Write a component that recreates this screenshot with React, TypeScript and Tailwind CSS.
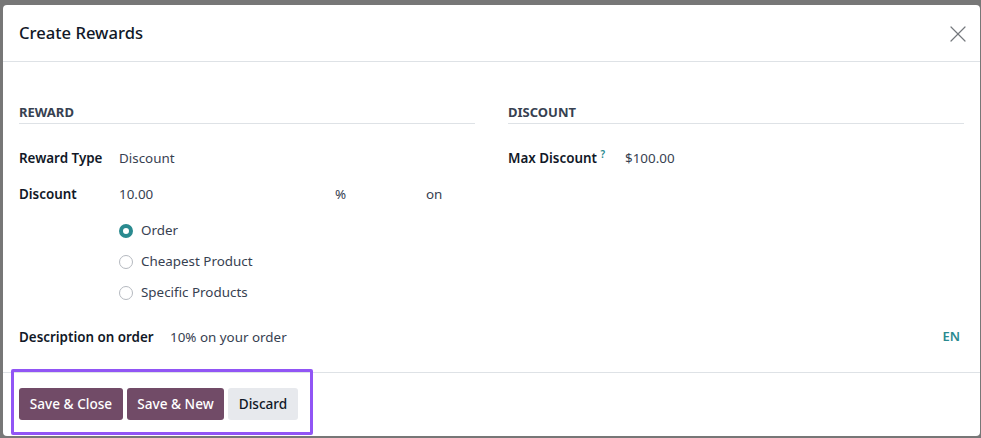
import { X } from "lucide-react";

function Radio({ label, checked }: { label: string; checked?: boolean }) {
  return (
    <div className="flex items-center gap-[8px] h-[31px]">
      {checked ? (
        <span className="w-[14px] h-[14px] rounded-full border-[4px] border-[#2a8a8f] bg-white" />
      ) : (
        <span className="w-[14px] h-[14px] rounded-full border border-[#b5b9bf] bg-white" />
      )}
      <span>{label}</span>
    </div>
  );
}

export default function App() {
  return (
    <div
      className="h-[438px] w-[981px] bg-[#777777] pt-[5px] pl-[3px] pr-[1px] pb-[2px] text-[13.4px] text-[#374151]"
      style={{ fontFamily: '"Noto Sans", "Open Sans", sans-serif' }}
    >
      <div className="relative h-full bg-white rounded-[4px] flex flex-col">
        {/* header */}
        <div className="h-[57px] flex items-center justify-between pl-[16px] pr-[8px] border-b border-[#dee2e6] shrink-0">
          <h1 className="text-[16.6px] font-medium text-[#111827] mt-[1px]">Create Rewards</h1>
          <X className="w-[28px] h-[28px] text-[#74787d] mt-[1px]" strokeWidth={1.05} />
        </div>

        {/* body */}
        <div className="flex-1 px-[16px] pt-[41px]">
          <div className="grid grid-cols-2 gap-x-[33px]">
            <div>
              <div className="text-[13px] font-bold text-[#374151] border-b border-[#dee2e6] pb-[2px] leading-[18px]">REWARD</div>
              <div className="mt-[24px] flex items-center h-[20px]">
                <span className="w-[100px] font-semibold text-[#111827]">Reward Type</span>
                <span>Discount</span>
              </div>
              <div className="mt-[16px] flex items-center h-[20px]">
                <span className="w-[100px] font-semibold text-[#111827]">Discount</span>
                <span className="w-[216px]">10.00</span>
                <span className="w-[91px]">%</span>
                <span>on</span>
              </div>
              <div className="mt-[11px] pl-[100px]">
                <Radio label="Order" checked />
                <Radio label="Cheapest Product" />
                <Radio label="Specific Products" />
              </div>
            </div>
            <div>
              <div className="text-[13px] font-bold text-[#374151] border-b border-[#dee2e6] pb-[2px] leading-[18px]">DISCOUNT</div>
              <div className="mt-[24px] flex items-center h-[20px]">
                <span className="w-[117px] font-semibold text-[#111827]">
                  Max Discount <sup className="text-[#2a8a8f] text-[10px] font-semibold">?</sup>
                </span>
                <span>$100.00</span>
              </div>
            </div>
          </div>
          <div className="mt-[19px] flex items-center h-[20px]">
            <span className="w-[151px] font-semibold text-[#111827]">Description on order</span>
            <span className="flex-1">10% on your order</span>
            <span className="text-[#2a8a8f] font-semibold text-[13px] pr-[4px]">EN</span>
          </div>
        </div>

        {/* footer */}
        <div className="h-[64px] border-t border-[#dee2e6] shrink-0 pl-[16px] pt-[15px] flex gap-[4px] items-start">
          <button className="h-[32px] rounded-[3px] bg-[#714b67] text-white font-medium w-[104px] whitespace-nowrap text-[13.6px]">Save &amp; Close</button>
          <button className="h-[32px] rounded-[3px] bg-[#714b67] text-white font-medium w-[97px] whitespace-nowrap text-[13.6px]">Save &amp; New</button>
          <button className="h-[32px] rounded-[3px] bg-[#e7e9ed] text-[#111827] font-medium w-[70px] whitespace-nowrap text-[13.6px]">Discard</button>
        </div>

        {/* highlight annotation */}
        <div className="absolute left-[8px] top-[364px] w-[302px] h-[66px] border-[3px] border-[#9155f5] rounded-[2px] pointer-events-none" />
      </div>
    </div>
  );
}
